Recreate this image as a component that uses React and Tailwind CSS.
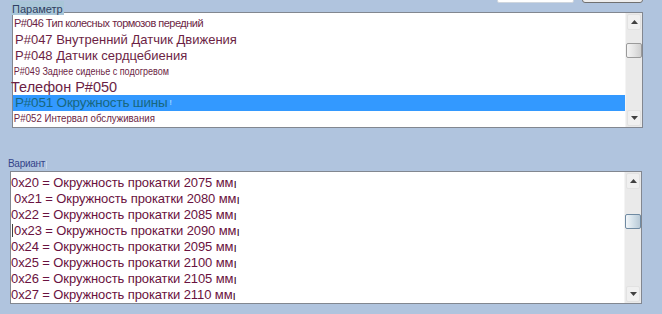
import React from 'react';

const params = [
  { text: 'P#046 Тип колесных тормозов передний', cls: 'text-[11px] tracking-[-0.5px] pl-[1px]' },
  { text: 'P#047 Внутренний Датчик Движения', cls: 'text-[13px] pl-[2px]' },
  { text: 'P#048 Датчик сердцебиения', cls: 'text-[13px] pl-[2px]' },
  { text: 'P#049 Заднее сиденье с подогревом', cls: 'text-[11px] pl-[1px] scale-x-[0.82] origin-left inline-block' },
  { text: 'Телефон P#050', cls: 'text-[14.5px] -ml-[2px]' },
  { text: 'P#051 Окружность шины', cls: 'text-[13.5px] pl-[2px] tracking-[-0.2px]', selected: true },
  { text: 'P#052 Интервал обслуживания', cls: 'text-[11.5px] pl-[1px] scale-x-[0.84] origin-left inline-block' },
];

const variants = [
  { code: '0x20', mm: 2075, pad: 'pl-0' },
  { code: '0x21', mm: 2080, pad: 'pl-[3px]' },
  { code: '0x22', mm: 2085, pad: 'pl-0' },
  { code: '0x23', mm: 2090, pad: 'pl-[3px]', caret: true },
  { code: '0x24', mm: 2095, pad: 'pl-0' },
  { code: '0x25', mm: 2100, pad: 'pl-0' },
  { code: '0x26', mm: 2105, pad: 'pl-0' },
  { code: '0x27', mm: 2110, pad: 'pl-0' },
];

const Arrow = ({ up }) => (
  <svg width="7" height="4" viewBox="0 0 7 4" className="block">
    {up ? <path d="M0 4 L3.5 0 L7 4 Z" fill="#404040" /> : <path d="M0 0 L7 0 L3.5 4 Z" fill="#404040" />}
  </svg>
);

const ScrollBar = ({ thumbTop, focused }) => (
  <div className="w-[17px] h-full bg-[#eaeaea] border-l border-[#f4f4f4] flex flex-col">
    <div className="h-[16px] mx-[1px] mt-[1px] border border-[#e2e2e2] rounded-[2px] bg-[#f0f0f0] flex items-center justify-center">
      <Arrow up />
    </div>
    <div className="flex-1 relative">
      <div
        className={
          focused
            ? 'absolute left-0 right-0 h-[15px] border border-[#6f8aa2] rounded-[2px] bg-gradient-to-r from-[#f2f6f9] via-[#d4e1ea] to-[#b9cad7]'
            : 'absolute left-0 right-0 h-[15px] border border-[#9a9a9a] rounded-[2px] bg-gradient-to-r from-[#f4f4f4] via-[#e4e4e4] to-[#cfcfcf]'
        }
        style={{ top: thumbTop }}
      />
    </div>
    <div className="h-[16px] mx-[1px] mb-[1px] border border-[#e2e2e2] rounded-[2px] bg-[#f0f0f0] flex items-center justify-center">
      <Arrow />
    </div>
  </div>
);

export default function App() {
  return (
    <div className="w-[662px] h-[314px] bg-[#b0c4de] overflow-hidden font-['Liberation_Sans',Arial,sans-serif]">
      {/* top strip */}
      <div className="h-[12px] flex items-end relative">
        <div className="ml-[11px] -mb-[3px] px-[1px] h-[14px] bg-[#a9c6d8] text-[11px] leading-[11px] text-[#2f3f62] flex items-end">
          Параметр
        </div>
        <div className="ml-auto mb-[9px] w-[77px] h-[12px] bg-white border border-[#cfd6de] rounded-[2px]" />
        <div className="ml-[8px] mr-[19px] mb-[9px] w-[61px] h-[14px] bg-[#eeeeee] border border-[#707070] rounded-[3px]" />
      </div>

      {/* parameter list */}
      <div className="ml-[12px] mr-[19px] h-[116px] bg-white border border-[#828790] flex">
        <div className="flex-1 pt-[2px]">
          {params.map((p) => (
            <div
              key={p.text}
              className={
                p.selected
                  ? 'h-[16px] bg-[#3399ff] flex items-center leading-none'
                  : 'h-[16px] flex items-center leading-none'
              }
            >
              <span className={`${p.cls} ${p.selected ? 'text-[#17677e]' : 'text-[#6c1f45]'} whitespace-nowrap`}>
                {p.text}
              </span>
              {p.selected && <span className="ml-[2px] text-[8px] text-[#cfe6ff]">!</span>}
            </div>
          ))}
        </div>
        <ScrollBar thumbTop={13} />
      </div>

      {/* variant label */}
      <div className="mt-[28px] ml-[8px] h-[13px] flex items-end">
        <span className="text-[10px] leading-[10px] text-[#34448a] tracking-[-0.3px]">Вариант</span>
        <span className="ml-[1px] w-[1px] h-[8px] bg-[#c7d6ea]" />
      </div>

      {/* variant list */}
      <div className="ml-[10px] mr-[20px] mt-[2px] h-[133px] bg-white border border-[#828790] flex">
        <div className="flex-1 pt-[2px]">
          {variants.map((v) => (
            <div key={v.code} className={`h-[16px] flex items-center ${v.pad} relative`}>
              {v.caret && <span className="absolute left-[1px] top-[2px] w-[1px] h-[13px] bg-[#404040]" />}
              <span className="text-[13px] leading-none text-[#6a1240] whitespace-nowrap tracking-[-0.1px]">
                {v.code} = Окружность прокатки {v.mm} мм
              </span>
              <span className="text-[12px] leading-none text-[#3a0a20] mt-[3px]">ı</span>
            </div>
          ))}
        </div>
        <ScrollBar thumbTop={25} focused />
      </div>
    </div>
  );
}
